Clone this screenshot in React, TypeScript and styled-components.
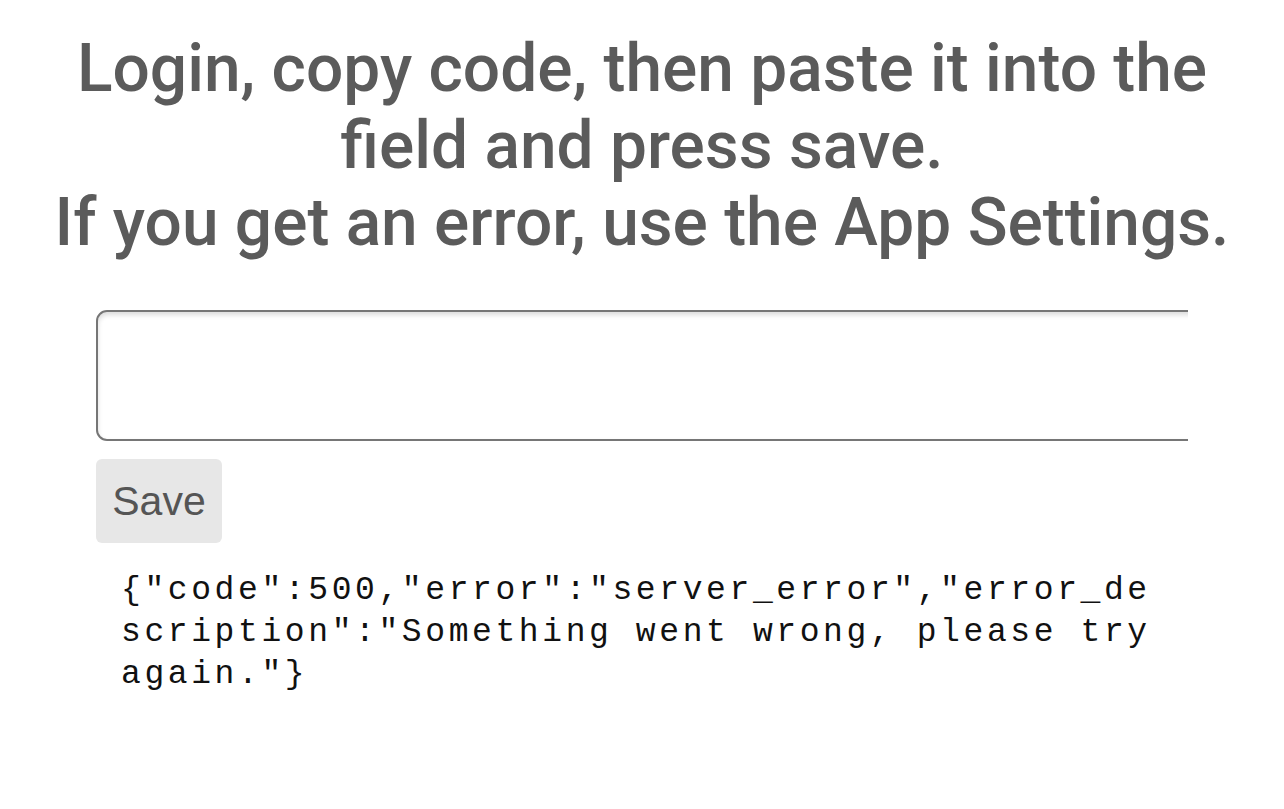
import styled, { createGlobalStyle } from 'styled-components';

const GlobalStyle = createGlobalStyle`
  html, body {
    margin: 0;
    padding: 0;
    background: #ffffff;
  }
`;

const Page = styled.div`
  display: flex;
  flex-direction: column;
  align-items: center;
  padding-top: 30px;
`;

const Heading = styled.h1`
  margin: 0;
  font-family: Roboto, "Noto Sans", sans-serif;
  font-weight: 500;
  font-size: 65.8px;
  line-height: 77px;
  color: #5b5b5b;
  text-align: center;
`;

const Form = styled.div`
  align-self: stretch;
  display: flex;
  flex-direction: column;
  align-items: flex-start;
  padding: 49px 0 0 96px;
`;

const FieldClip = styled.div`
  width: 1092px;
  overflow: hidden;
`;

const CodeInput = styled.input`
  display: block;
  box-sizing: border-box;
  width: 1110px;
  height: 131px;
  border: 2.5px solid #767676;
  border-radius: 11px;
  box-shadow: inset 0 3px 5px rgba(0, 0, 0, 0.14);
  background: #ffffff;
  font-size: 32px;
  outline: none;
`;

const SaveButton = styled.button`
  margin-top: 18px;
  width: 126px;
  height: 84px;
  border: none;
  border-radius: 6px;
  background: #e7e7e7;
  color: #555555;
  font-family: "Liberation Sans", Arial, sans-serif;
  font-size: 41px;
  padding: 0;
`;

const ErrorText = styled.pre`
  margin: 27px 0 0 25px;
  width: 1040px;
  font-family: "Liberation Mono", "Courier New", monospace;
  font-size: 33px;
  letter-spacing: 3.6px;
  line-height: 42px;
  color: #111111;
  white-space: pre-wrap;
  word-break: break-all;
`;

const errorBody = '{"code":500,"error":"server_error","error_description":"Something went wrong, please try again."}';

export default function App() {
  return (
    <>
      <GlobalStyle />
      <Page>
        <Heading>
          Login, copy code, then paste it into the
          <br />
          field and press save.
          <br />
          If you get an error, use the App Settings.
        </Heading>
        <Form>
          <FieldClip>
            <CodeInput type="text" />
          </FieldClip>
          <SaveButton>Save</SaveButton>
          <ErrorText>{errorBody}</ErrorText>
        </Form>
      </Page>
    </>
  );
}
